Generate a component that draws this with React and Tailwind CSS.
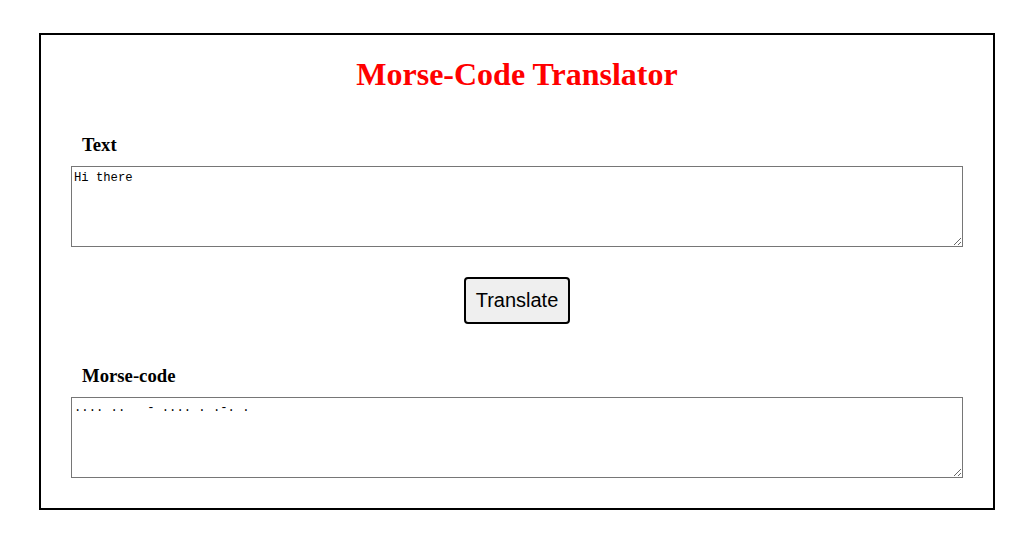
import { useState } from 'react'

const MORSE = {
  a: '.-', b: '-...', c: '-.-.', d: '-..', e: '.', f: '..-.', g: '--.', h: '....',
  i: '..', j: '.---', k: '-.-', l: '.-..', m: '--', n: '-.', o: '---', p: '.--.',
  q: '--.-', r: '.-.', s: '...', t: '-', u: '..-', v: '...-', w: '.--', x: '-..-',
  y: '-.--', z: '--..',
}

const toMorse = (str) =>
  str
    .toLowerCase()
    .split(' ')
    .map((word) => word.split('').map((c) => MORSE[c] || '').join(' '))
    .join('   ')

export default function App() {
  const [text, setText] = useState('Hi there')
  const [morse, setMorse] = useState(toMorse('Hi there'))

  return (
    <div className="min-h-screen bg-white pt-[33px]" style={{ fontFamily: '"Liberation Serif", serif' }}>
      <div className="ml-[39px] w-[956px] border-2 border-black px-[30px] pb-[30px] flex flex-col">
        <h1 className="mt-[21px] text-center text-[32px] leading-[37px] font-bold text-[#ff0000]">
          Morse-Code Translator
        </h1>

        <h3 className="mt-[41px] ml-[11px] text-[18.72px] leading-[22px] font-bold text-black">Text</h3>
        <textarea
          value={text}
          onChange={(e) => setText(e.target.value)}
          className="mt-[10px] h-[81px] w-full border border-[#767676] bg-white px-[2px] pt-[4px] pb-[2px] text-[12.2px] leading-[15px] text-black outline-none"
          style={{ fontFamily: '"Liberation Mono", monospace' }}
        />

        <div className="mt-[30px] flex justify-center">
          <button
            onClick={() => setMorse(toMorse(text))}
            className="rounded-[4px] border-2 border-black bg-[#efefef] px-[10px] py-[10px] text-[20px] leading-[23px] text-black"
            style={{ fontFamily: '"Liberation Sans", Arial, sans-serif' }}
          >
            Translate
          </button>
        </div>

        <h3 className="mt-[41px] ml-[11px] text-[18.72px] leading-[22px] font-bold text-black">Morse-code</h3>
        <textarea
          value={morse}
          readOnly
          className="mt-[10px] h-[81px] w-full border border-[#767676] bg-white px-[2px] pt-[3px] pb-[2px] text-[12.2px] leading-[15px] text-black outline-none"
          style={{ fontFamily: '"Liberation Mono", monospace' }}
        />
      </div>
    </div>
  )
}
